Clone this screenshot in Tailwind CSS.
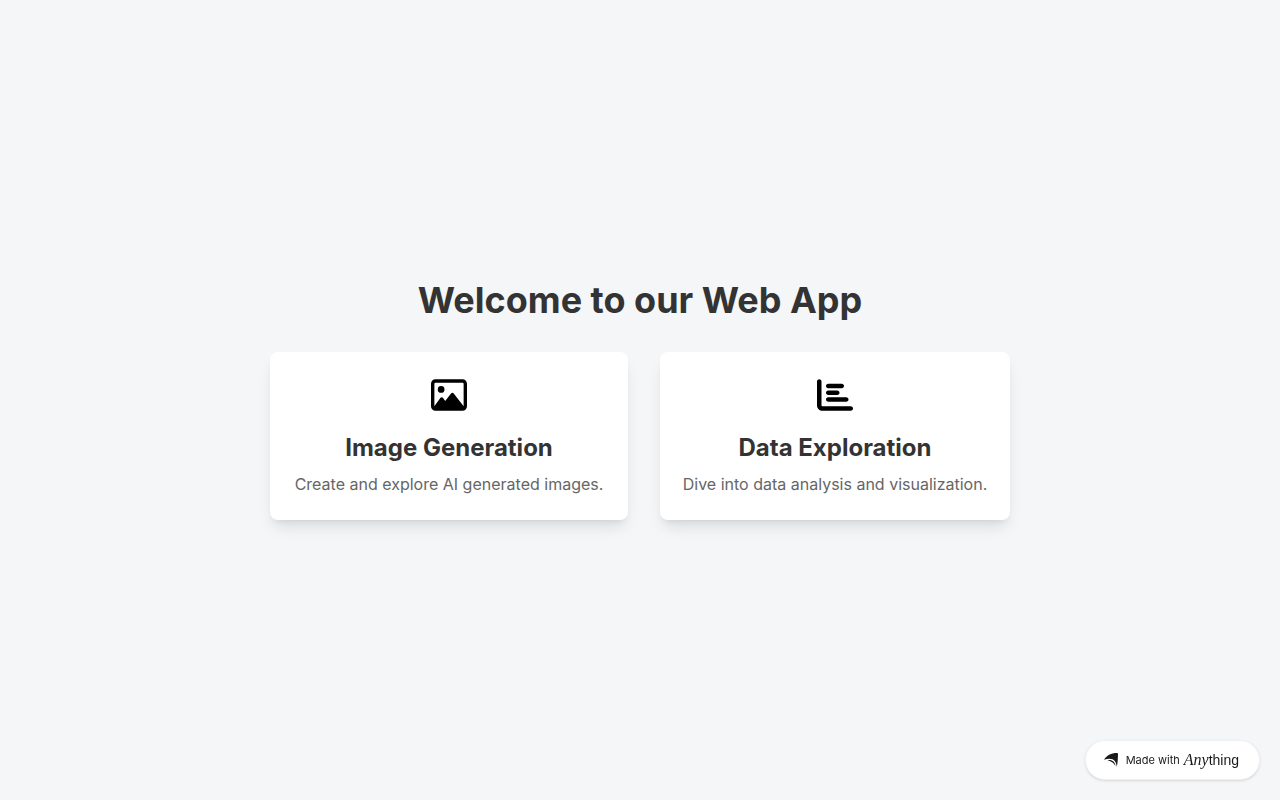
<!DOCTYPE html>
<html lang="en">
<head>
<meta charset="utf-8">
<meta name="viewport" content="width=device-width, initial-scale=1">
<title>Welcome to our Web App</title>
<script src="https://cdn.jsdelivr.net/npm/@tailwindcss/browser@4"></script>
</head>
<body class="font-['Inter',sans-serif]">
<main class="min-h-screen flex flex-col items-center justify-center bg-[#f5f6f8]">
  <h1 class="mb-8 text-4xl font-bold text-[#333]">Welcome to our Web App</h1>
  <div class="flex flex-wrap justify-center gap-8">
    <a href="#images" class="flex flex-col items-center rounded-lg bg-white px-[22px] py-6 text-center shadow-lg sm:min-w-[358px]">
      <svg class="mt-px mb-[19px] size-9" viewBox="0 0 512 512" fill="#000" aria-hidden="true"><path d="M448 80c8.800 0 16 7.200 16 16V415.800l-5-6.500-136-176c-4.500-5.900-11.600-9.300-19-9.300s-14.400 3.400-19 9.300L202 340.700l-30.500-42.700C167 291.700 159.800 288 152 288s-15 3.700-19.500 10.100l-80 112L48 416.300l0-.3V96c0-8.800 7.200-16 16-16H448zM64 32C28.700 32 0 60.700 0 96V416c0 35.300 28.700 64 64 64H448c35.300 0 64-28.700 64-64V96c0-35.300-28.700-64-64-64H64zm80 192a48 48 0 1 0 0-96 48 48 0 1 0 0 96z"/></svg>
      <h2 class="mb-2 text-2xl font-bold text-[#333]">Image Generation</h2>
      <p class="text-base text-[#666]">Create and explore AI generated images.</p>
    </a>
    <a href="#data" class="flex flex-col items-center rounded-lg bg-white px-[22px] py-6 text-center shadow-lg sm:min-w-[350px]">
      <svg class="mt-px mb-[19px] size-9" viewBox="0 0 512 512" fill="#000" aria-hidden="true"><path d="M32 32c17.700 0 32 14.300 32 32V400c0 8.800 7.200 16 16 16H480c17.700 0 32 14.300 32 32s-14.300 32-32 32H80c-44.200 0-80-35.800-80-80V64C0 46.300 14.300 32 32 32zm96 96c0-17.700 14.300-32 32-32l192 0c17.700 0 32 14.300 32 32s-14.300 32-32 32l-192 0c-17.700 0-32-14.300-32-32zm32 64H288c17.700 0 32 14.300 32 32s-14.300 32-32 32H160c-17.700 0-32-14.300-32-32s14.300-32 32-32zm0 96H416c17.700 0 32 14.300 32 32s-14.300 32-32 32H160c-17.700 0-32-14.300-32-32s14.300-32 32-32z"/></svg>
      <h2 class="mb-2 text-2xl font-bold text-[#333]">Data Exploration</h2>
      <p class="text-base text-[#666]">Dive into data analysis and visualization.</p>
    </a>
  </div>
</main>
<a href="#anything" class="fixed right-5 bottom-5 flex min-h-10 items-center rounded-full border border-[#f0f1f3] bg-white pr-5 pl-[18px] text-[#18191b] shadow-sm">
  <svg class="mr-2 h-4 w-[14px]" viewBox="0 0 14 16" fill="currentColor" aria-hidden="true"><path d="M0 7.800C2.500 3.500 7 1 13 1c.8 0 1.100.4 1 1.300-.1 4.800-.4 9.300-1.300 12.700C12.500 8.500 8.500 4.800 0 7.800z"/><path d="M3.500 8.300c4.400-.9 7.500 1.400 8 5.700-1.600-2.500-3.500-4.600-8-5.700z"/></svg>
  <span class="mr-1 font-['Inter',sans-serif] text-[11px]">Made with</span>
  <span class="flex items-baseline leading-5"><span class="font-['Liberation_Serif',serif] text-base leading-5 italic">Any</span><span class="font-['Liberation_Sans',sans-serif] text-sm">thing</span></span>
</a>
</body>
</html>
